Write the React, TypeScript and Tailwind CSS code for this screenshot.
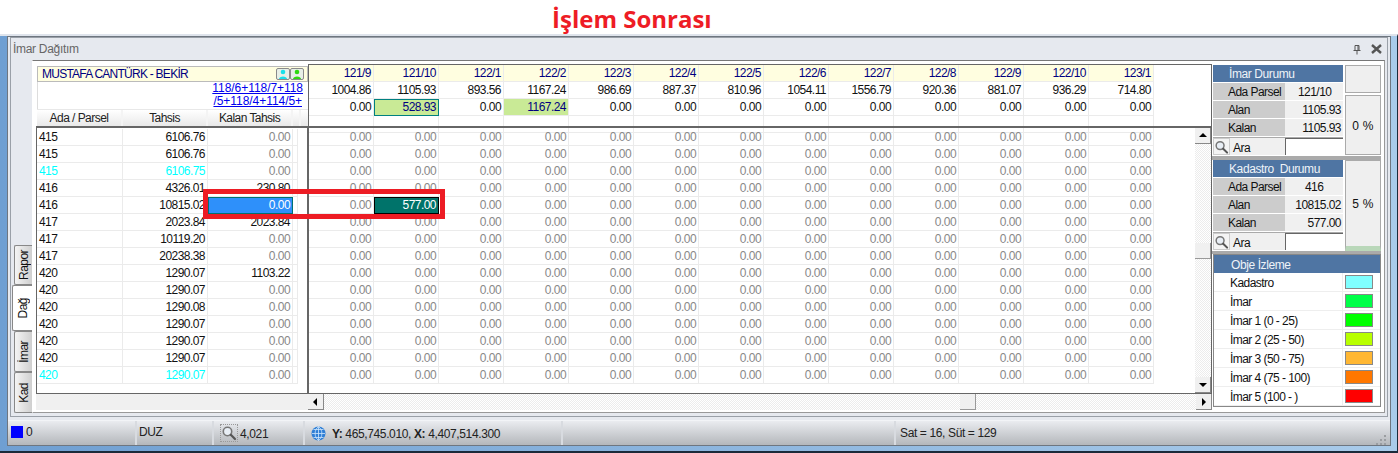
import React from "react";

const cols = [
  ["121/9", "1004.86"], ["121/10", "1105.93"], ["122/1", "893.56"], ["122/2", "1167.24"],
  ["122/3", "986.69"], ["122/4", "887.37"], ["122/5", "810.96"], ["122/6", "1054.11"],
  ["122/7", "1556.79"], ["122/8", "920.36"], ["122/9", "881.07"], ["122/10", "936.29"], ["123/1", "714.80"],
];

const rows: [string, string, string, boolean?][] = [
  ["415", "6106.76", "0.00"], ["415", "6106.76", "0.00"], ["415", "6106.75", "0.00", true],
  ["416", "4326.01", "230.80"], ["416", "10815.02", "0.00"], ["417", "2023.84", "2023.84"],
  ["417", "10119.20", "0.00"], ["417", "20238.38", "0.00"], ["420", "1290.07", "1103.22"],
  ["420", "1290.07", "0.00"], ["420", "1290.08", "0.00"], ["420", "1290.07", "0.00"],
  ["420", "1290.07", "0.00"], ["420", "1290.07", "0.00"], ["420", "1290.07", "0.00", true],
];

const legend: [string, string][] = [
  ["Kadastro", "bg-[#80ffff]"], ["İmar", "bg-[#00ff48]"], ["İmar 1 (0 - 25)", "bg-[#00ff00]"],
  ["İmar 2 (25 - 50)", "bg-[#b8ff00]"], ["İmar 3 (50 - 75)", "bg-[#ffb733]"],
  ["İmar 4 (75 - 100)", "bg-[#ff7700]"], ["İmar 5 (100 - )", "bg-[#ff0000]"],
];

const Arrow = ({ dir }: { dir: "up" | "down" | "left" | "right" }) => {
  const p = { up: "1,6 9,6 5,2", down: "1,3 9,3 5,7", left: "6,1 6,9 2,5", right: "3,1 3,9 7,5" }[dir];
  return <svg width="10" height="10" viewBox="0 0 10 10"><polygon points={p} fill="#000" /></svg>;
};

const SBtn = ({ dir }: { dir: "up" | "down" | "left" | "right" }) => (
  <div className="flex h-[16px] w-[16px] shrink-0 items-center justify-center border-r border-b border-[#888] bg-[#f0f0f0]">
    <Arrow dir={dir} />
  </div>
);

const Thumb = () => <div className="h-[16px] w-[16px] shrink-0 border-r border-b border-[#999] bg-[#f0f0f0]" />;

const Mag = () => (
  <svg width="16" height="16" viewBox="0 0 16 16" fill="none">
    <circle cx="6.5" cy="6.5" r="4.2" stroke="#777" strokeWidth="1.6" fill="#e8eef5" />
    <path d="M9.8 9.8 14 14" stroke="#555" strokeWidth="2.2" strokeLinecap="round" />
  </svg>
);

const Person = ({ color }: { color: string }) => (
  <div className="flex h-[12px] w-[14px] items-center justify-center rounded-[2px] border border-[#8a8a8a] bg-[#e8efe8]">
    <svg width="10" height="10" viewBox="0 0 10 10">
      <circle cx="5" cy="3" r="2.3" fill={color} />
      <path d="M1 10 C1 6.5 9 6.5 9 10Z" fill={color} />
    </svg>
  </div>
);

const Status = ({ title, rows }: { title: string; rows: [string, string, string?][] }) => (
  <div className="flex w-[130px] flex-col">
    <div className="h-[17px] overflow-hidden whitespace-pre bg-[#4f75a3] pl-[16px] leading-[19px] tracking-[-0.4px] text-[#eef3f8]">{title}</div>
    <div className="mt-px flex flex-col gap-px">
      {rows.map(([a, b, c]) => (
        <div key={a} className="flex h-[17px] overflow-hidden bg-[#f0f0f0] leading-[19px]">
          <div className="w-[72px] bg-[#cccccc] pl-[15px] text-[#111]">{a}</div>
          <div className={`flex-1 text-[#111] ${c ?? "pr-[2px] text-right"}`}>{b}</div>
        </div>
      ))}
    </div>
    <div className="mt-[1px] flex h-[18px] border-t border-[#aaa] bg-[#f0f0f0]">
      <div className="flex h-[17px] w-[17px] items-center justify-center border border-[#ccc] bg-[#f4f4f4]"><Mag /></div>
      <div className="w-[55px] pl-[3px] leading-[20px] text-[#111]">Ara</div>
      <div className="flex-1 border-t border-l border-[#666] bg-white" />
    </div>
  </div>
);

const Side = ({ className, children }: { className: string; children?: React.ReactNode }) => (
  <div className={`relative flex items-center justify-center border border-[#aaa] bg-[#efefef] pt-[1px] tracking-[0.2px] text-[#111] ${className}`}>{children}</div>
);

const Tab = ({ label, active, h }: { label: string; active?: boolean; h: string }) => (
  <div className={`flex items-center justify-center rounded-l-[2px] border-y border-l border-[#888] ${h} ${active ? "ml-[1px] w-[20px] bg-white" : "ml-[3px] w-[18px] bg-gradient-to-r from-[#f4f4f4] to-[#cfcfcf]"}`}>
    <span className="rotate-180 text-[#111] [writing-mode:vertical-rl]">{label}</span>
  </div>
);

const SCell = ({ w, v, cls }: { w: string; v: string; cls: string }) => (
  <div className={`h-[17px] shrink-0 truncate border-r border-b border-[#ebebeb] pr-[2px] text-right leading-[16px] ${w} ${cls}`}>{v}</div>
);

export default function App() {
  return (
    <div className="relative flex h-[453px] w-[1398px] flex-col overflow-hidden bg-white font-['Liberation_Sans',sans-serif] text-[12px] tracking-[-0.55px]">
      <div className="flex h-[34px] shrink-0 items-center pt-[4px] pl-[552px] font-['Open_Sans',sans-serif] text-[24px] leading-[30px] font-bold tracking-normal text-[#ee1c25]">
        <span>İşlem Sonrası</span>
      </div>

      <div className="flex min-h-0 flex-1 flex-col border-t-2 border-r border-b-2 border-[#dfe4ec] border-r-[#1b2a3a] border-b-[#1b2a3a] bg-gradient-to-r from-[#6f9fd2] to-[#a9cbea] px-[7px] pr-[6px] pb-[5px]">
        <div className="flex min-h-0 flex-1 flex-col border-x border-t border-b border-[#6e7680] bg-[#e6e9ef]">
          <div className="mx-[2px] mt-0 mb-[3px] flex h-[380px] flex-col border border-[#9aa0a8]">
            <div className="flex h-[22px] shrink-0 items-center justify-between pr-[5px] pl-[2px] text-[#666]">
              <span className="tracking-[-0.3px]">İmar Dağıtım</span>
              <div className="flex items-center gap-[9px]">
                <svg width="10" height="11" viewBox="0 0 10 11" fill="none" stroke="#555"><path d="M3 1.5h4v5H3zM1.5 6.5h7M5 6.5V10.5M6 2v4" /></svg>
                <svg width="11" height="10" viewBox="0 0 11 10" stroke="#555" strokeWidth="2.4"><path d="M1 1l9 8M10 1l-9 8" /></svg>
              </div>
            </div>
            <div className="flex min-h-0 flex-1 pr-[2px] pb-[3px]">
              <div className="flex w-[21px] shrink-0 flex-col justify-end">
                <Tab label="Rapor" h="h-[40px]" />
                <Tab label="Dağ" active h="h-[46px]" />
                <Tab label="İmar" h="h-[41px]" />
                <Tab label="Kad" h="h-[41px]" />
              </div>
              <div className="flex min-w-0 flex-1 border-t border-r border-b border-l border-t-[#777] border-r-[#999] border-b-[#999] border-l-white bg-white pt-[3px] pl-[3px]">
                <div className="flex w-[1176px] shrink-0 flex-col">
                  <div className="flex h-[62px] shrink-0">
                    <div className="flex w-[272px] shrink-0 flex-col pt-[2px] pl-[1px]">
                      <div className="flex h-[16px] items-center justify-between border border-[#bbb] bg-[#fffee0] pr-[3px] pl-[4px] tracking-[-0.75px] text-[#000080]">
                        <span>MUSTAFA CANTÜRK - BEKİR</span>
                        <div className="flex gap-[0px]"><Person color="#19e0ea" /><Person color="#2ed80f" /></div>
                      </div>
                      <div className="flex h-[27px] flex-col items-end border-l border-[#ddd] pr-[5px] tracking-[-0.05px] text-[#0000ee] underline">
                        <span className="leading-[13px]">118/6+118/7+118</span>
                        <span className="pr-[1px] leading-[13px]">/5+118/4+114/5+</span>
                      </div>
                      <div className="flex h-[17px] border-t border-[#e8e8e8] bg-gradient-to-b from-white to-[#e9e9e9] text-center leading-[17px] text-[#222]">
                        <div className="w-[86px] border-r-2 border-[#f4f4f4]">Ada / Parsel</div>
                        <div className="w-[85px] border-r-2 border-[#f4f4f4]">Tahsis</div>
                        <div className="w-[85px] border-r-2 border-[#f4f4f4]">Kalan Tahsis</div>
                        <div className="w-[8px] border-r-2 border-[#f4f4f4]" />
                      </div>
                    </div>
                    <div className="flex flex-1 flex-col border-x border-t border-[#666]">
                      <div className="flex">
                        {cols.map(([n]) => <SCell key={n} w="w-[65px]" v={n} cls="bg-[#fffee0] text-[#000080]" />)}
                      </div>
                      <div className="flex">
                        {cols.map(([n, v]) => <SCell key={n} w="w-[65px]" v={v} cls="text-[#111]" />)}
                      </div>
                      <div className="flex">
                        {cols.map(([n], i) => (
                          <SCell key={n} w="w-[65px]" v={i === 1 ? "528.93" : i === 3 ? "1167.24" : "0.00"}
                            cls={i === 1 ? "bg-[#c9ea96] text-[#000080] outline outline-[#008080] outline-offset-[-1px]" : i === 3 ? "bg-[#c9ea96] text-[#000080]" : "text-[#111]"} />
                        ))}
                      </div>
                      <div className="flex">
                        {cols.map(([n]) => <SCell key={n} w="w-[65px]" v="" cls="h-[10px]" />)}
                      </div>
                    </div>
                  </div>

                  <div className="flex h-[268px] shrink-0 border-t-2 border-r border-b border-l border-[#666]">
                    <div className="w-[272px] shrink-0 border-r-2 border-[#666] pt-[1px]">
                      {rows.map(([a, b, c, cy], i) => (
                        <div key={i} className="flex h-[17px]">
                          <div className={`h-[17px] w-[86px] border-r border-b border-[#ebebeb] pl-[2px] leading-[16px] ${cy ? "text-[#00ffff]" : "text-[#111]"}`}>{a}</div>
                          <SCell w="w-[85px]" v={b} cls={cy ? "text-[#00ffff]" : "text-[#111]"} />
                          {i === 4 ? (
                            <SCell w="w-[85px]" v={c} cls="bg-[#2e90fa] text-white outline outline-[#007070] outline-offset-[-1px]" />
                          ) : (
                            <SCell w="w-[85px]" v={c} cls={c === "0.00" ? "text-[#888]" : "text-[#111]"} />
                          )}
                          <div className="h-[17px] w-[5px] border-r border-b border-[#ebebeb]" />
                        </div>
                      ))}
                    </div>
                    <div className="min-w-0 flex-1 pt-[1px]">
                      {rows.map((_, i) => (
                        <div key={i} className="flex h-[17px]">
                          {cols.map(([n], j) =>
                            i === 4 && j === 1 ? (
                              <SCell key={n} w="w-[65px]" v="577.00" cls="bg-[#00736a] text-white outline outline-black outline-offset-[-1px]" />
                            ) : (
                              <SCell key={n} w="w-[65px]" v="0.00" cls="text-[#888]" />
                            )
                          )}
                        </div>
                      ))}
                    </div>
                    <div className="flex w-[16px] shrink-0 flex-col bg-[repeating-conic-gradient(#ececec_0_25%,#ffffff_0_50%)] bg-[length:2px_2px]">
                      <SBtn dir="up" />
                      <div className="h-[99px]" />
                      <Thumb />
                      <div className="flex-1" />
                      <SBtn dir="down" />
                    </div>
                  </div>

                  <div className="flex h-[16px] shrink-0">
                    <div className="w-[272px] shrink-0 bg-[#f0f0f0]" />
                    <SBtn dir="left" />
                    <div className="flex flex-1 bg-[repeating-conic-gradient(#ececec_0_25%,#ffffff_0_50%)] bg-[length:2px_2px]">
                      <div className="w-[636px]" />
                      <Thumb />
                      <div className="flex-1" />
                    </div>
                    <SBtn dir="right" />
                  </div>
                </div>

                <div className="ml-[1px] flex w-[168px] shrink-0 flex-col pt-[1px]">
                  <div className="flex h-[91px] justify-between">
                    <Status title="İmar Durumu" rows={[["Ada Parsel", "121/10", "pl-[13px]"], ["Alan", "1105.93"], ["Kalan", "1105.93"]]} />
                    <div className="flex w-[36px] flex-col gap-[2px]">
                      <Side className="h-[28px]" />
                      <Side className="h-[60px]">0 %</Side>
                    </div>
                  </div>
                  <div className="ml-[-1px] h-[4px] shrink-0 bg-[#aaa]" />
                  <div className="flex h-[91px] justify-between">
                    <Status title="Kadastro  Durumu" rows={[["Ada Parsel", "416", "pl-[20px]"], ["Alan", "10815.02"], ["Kalan", "577.00"]]} />
                    <Side className="h-[91px] w-[36px] border-b-[5px] border-b-[#b9d7b9]">5 %</Side>
                  </div>
                  <div className="ml-[-1px] h-[3px] shrink-0 bg-[#aaa]" />
                  <div className="border border-[#888]">
                    <div className="h-[18px] bg-[#4f75a3] pl-[17px] leading-[20px] tracking-[-0.4px] text-[#eef3f8]">Obje İzleme</div>
                    {legend.map(([l, c]) => (
                      <div key={l} className="flex h-[19px] border-b border-[#eee] text-[#111]">
                        <div className="w-[129px] border-r border-[#eee] pl-[16px] leading-[20px]">{l}</div>
                        <div className="flex flex-1 items-center pl-[2px]">
                          <div className={`h-[14px] w-[28px] border border-[#888] ${c}`} />
                        </div>
                      </div>
                    ))}
                  </div>
                </div>
              </div>
            </div>
          </div>

          <div className="flex min-h-0 flex-1 border-t border-[#f2f4f7] bg-gradient-to-b from-[#eaecf0] to-[#b4b7bb] tracking-[-0.37px] text-[#222]">
            <div className="flex w-[129px] items-center border-r-2 border-[#d8dbe0] pb-[2px] pl-[3px]">
              <div className="mr-[3px] h-[12px] w-[12px] bg-[#0000ff]" />0
            </div>
            <div className="flex w-[77px] items-center border-r-2 border-[#d8dbe0] pb-[2px] pl-[2px]">DUZ</div>
            <div className="flex w-[91px] items-center border-r-2 border-[#d8dbe0] pl-[6px]">
              <div className="border border-dotted border-[#999]"><Mag /></div><span className="ml-[2px] pt-[2px]">4,021</span>
            </div>
            <div className="flex w-[258px] items-center border-r-2 border-[#d8dbe0] pl-[6px]">
              <svg width="15" height="15" viewBox="0 0 15 15" fill="none">
                <circle cx="7.5" cy="7.5" r="7" fill="#2f7fd6" />
                <path d="M1 7.5h13M7.5 .5v14M2.5 3.5h10M2.5 11.5h10M7.5 .5C3 4 3 11 7.5 14.5M7.5 .5C12 4 12 11 7.5 14.5" stroke="#cfe6fb" strokeWidth=".8" />
              </svg>
              <span className="ml-[6px] pt-[2px]"><b>Y:</b> 465,745.010, <b>X:</b> 4,407,514.300</span>
            </div>
            <div className="flex w-[333px] border-r-2 border-[#d8dbe0]" />
            <div className="flex flex-1 items-center justify-between pr-[2px] pl-[4px]">
              <span>Sat = 16, Süt = 129</span>
              <svg className="mt-[14px]" width="12" height="11" viewBox="0 0 12 11" fill="#9a9da1">
                <rect x="8" y="0" width="2" height="2" /><rect x="4" y="4" width="2" height="2" /><rect x="8" y="4" width="2" height="2" />
                <rect x="0" y="8" width="2" height="2" /><rect x="4" y="8" width="2" height="2" /><rect x="8" y="8" width="2" height="2" />
              </svg>
            </div>
          </div>
        </div>
      </div>

      <div className="absolute top-[189px] left-[203px] h-[30px] w-[242px] border-[5px] border-[#ed1c24]" />
    </div>
  );
}
